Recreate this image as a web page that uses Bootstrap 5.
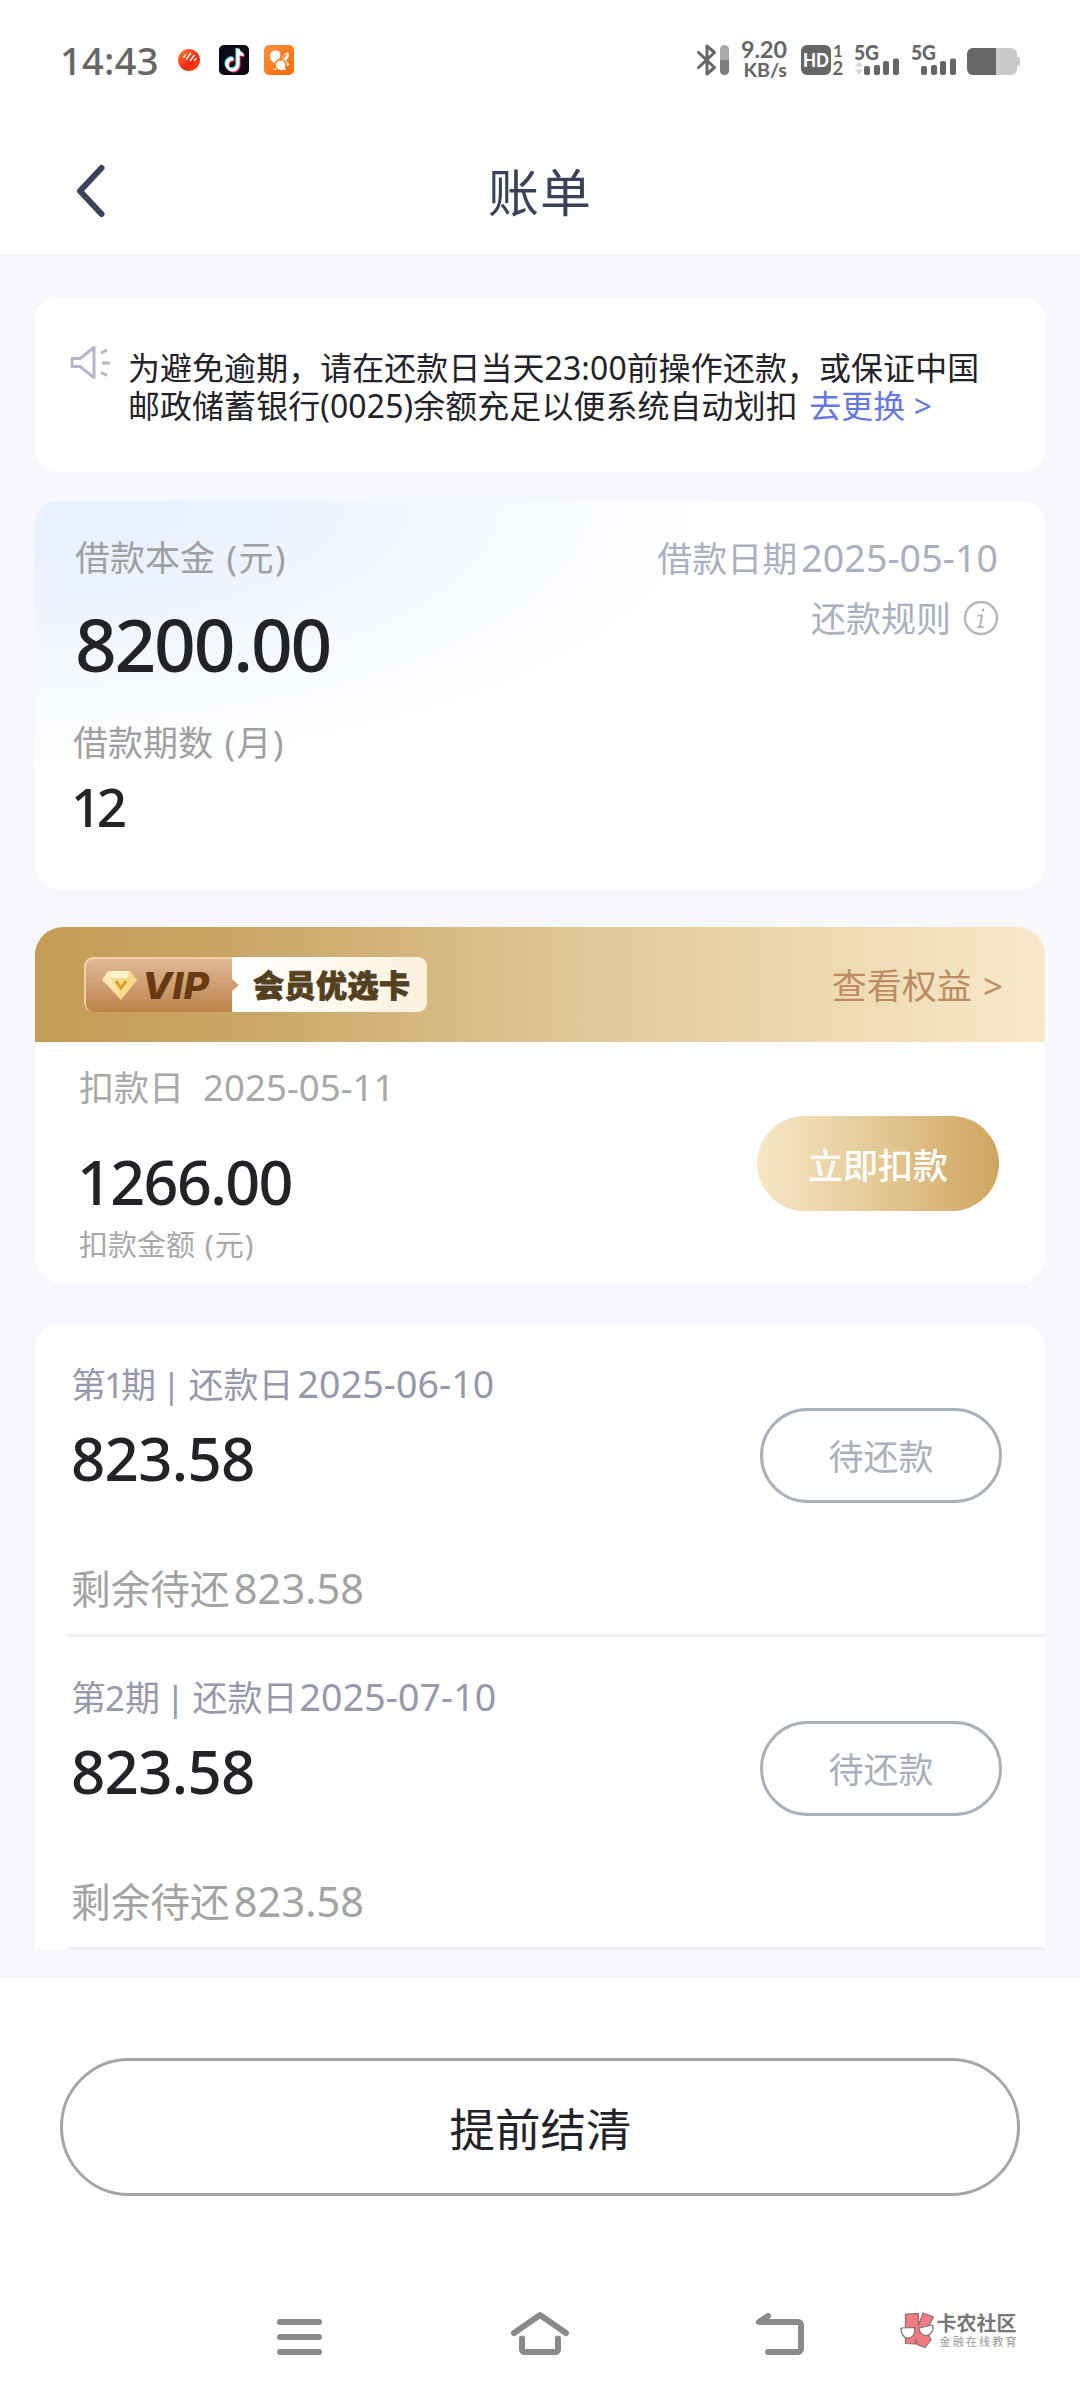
<!DOCTYPE html>
<html lang="zh-CN">
<head>
<meta charset="utf-8">
<meta name="viewport" content="width=device-width, initial-scale=1">
<title>账单</title>
<link href="https://cdn.jsdelivr.net/npm/bootstrap@5.3.0/dist/css/bootstrap.min.css" rel="stylesheet">
<style>
body{font-family:"Noto Sans","Noto Sans CJK SC",sans-serif;background:#fff;color:#222228;width:1080px;height:2400px;overflow:hidden}
svg{display:block;flex:none}
svg text{font-family:"Noto Sans","Noto Sans CJK SC",sans-serif}
.statusbar{height:120px;padding:0 60px;color:#666}
.clock{font-size:38px;font-weight:500;line-height:118px;width:98px;letter-spacing:.3px;white-space:nowrap}
.statusbar svg.status-icons text{font-family:Lato,"Noto Sans",sans-serif}
.titlebar{height:133px;padding:0 70px}
.titlebar h1{font-size:51px;font-weight:400;color:#39415b;line-height:145px;letter-spacing:1px;padding-top:11px}
.titlebar .side{width:60px;padding-top:9px}
.page-body{background:#f7f8fe;height:1726px;padding:45px 35px 0}
.panel{background:#fff;border-radius:22px}
.notice{height:174px;padding:51px 20px 0 33px;font-size:31.9px;letter-spacing:.15px;line-height:38px;margin-bottom:29px;white-space:nowrap}
.notice svg{margin-top:-3px}
.notice a{color:#6577e0;margin-left:3px}
.loan{height:388px;padding:36px 46px 0 40px;margin-bottom:38px;background:radial-gradient(ellipse 680px 270px at 0 0,#e8f1ff 0,#edf3ff 35%,#f8fbff 75%,#fff 100%) #fff}
.label-lg{font-size:35px;line-height:42px;color:#a0a0a3;white-space:nowrap}
.unit{letter-spacing:1.5px;margin-left:1px}
.label-sm .unit{letter-spacing:1.2px}
.cool{color:#aab0bf}
.loan-date{margin-right:1px}
.num{font-weight:500;white-space:nowrap}
.n-loan{font-size:73px;line-height:80px;letter-spacing:-2.2px;margin-top:25px}
.n-term{font-size:53px;line-height:60px;letter-spacing:-4.5px;margin:13px 0 0 -4px}
.term-count{margin:38px 0 0 -2px}
.rules{margin-top:18px}
.vip-panel{height:357px;margin-bottom:40px;overflow:hidden;border-radius:28px}
.vip-head{height:115px;padding:0 42px 0 49px;background:linear-gradient(90deg,#c39b55 0,#ccaa6b 25%,#e0c596 52%,#ecd7ae 75%,#f7e9ca 100%)}
.vip-link{font-size:35px;color:#bd8c63;text-decoration:none;white-space:nowrap;padding-top:4px}
.vip-body{padding:24px 46px 0 44px}
.n-fee{font-size:61px;line-height:70px;letter-spacing:-1.6px;margin:38px 0 0 -2px}
.label-sm{font-size:29px;line-height:36px;color:#a8a8a8;margin-top:10px;white-space:nowrap}
.pill{width:242px;height:95px;border-radius:48px;font-size:35px;padding:3px 0 0;line-height:1}
.pill-gold,.pill-gold:hover{background:linear-gradient(90deg,#f7e7c8,#e4c995 50%,#cfa45e);color:#fff;font-weight:500;border:0}
.pill-gold{margin-top:50px}
.pill-wait{border:3px solid #aab1bb;color:#aab0ba;background:#fff;margin-top:45px;padding-top:2px}
.plan{height:626px;border-radius:22px 22px 0 0;padding-left:32px}
.term{height:313px;padding:39px 43px 0 4px;border-bottom:3px solid #f0f1f7}
.term-cap{font-size:35px;line-height:42px;color:#9798aa;white-space:nowrap}
.n-one{letter-spacing:-3px;margin-left:-2px}
.n-two{letter-spacing:0;margin-left:-1px}
.divider-bar{margin:0 -1.5px 0 -3.5px}
.d{font-size:37.5px;letter-spacing:.1px}
.n-term-amt{font-size:60px;line-height:70px;letter-spacing:-.7px;margin-top:17px}
.remain{font-size:39.7px;line-height:50px;color:#a3a3a3;margin-top:70px;white-space:nowrap}
.remain .d{font-size:41.5px}
.settle-wrap{height:421px;padding:79px 60px 0}
.settle{height:138px;border:3px solid #a6a6a6;border-radius:69px;font-size:45.500px;color:#222228;background:#fff;line-height:1;padding:5px 0 0 1px}
.navkeys{margin-top:92px;height:70px;padding-left:217px}
</style>
<script src="https://cdn.jsdelivr.net/npm/bootstrap@5.3.0/dist/js/bootstrap.bundle.min.js"></script>
</head>
<body>
<header class="statusbar d-flex align-items-center justify-content-between">
  <div class="d-flex align-items-center">
    <span class="clock">14:43</span>
    <svg width="138" height="40" viewBox="158 40 138 40">
      <defs>
        <linearGradient id="red" x1="0" y1="0" x2="1" y2="1"><stop offset="0" stop-color="#ff873c"/><stop offset=".6" stop-color="#f22712"/><stop offset="1" stop-color="#f55a10"/></linearGradient>
        <linearGradient id="org" x1="0" y1="0" x2="1" y2="1"><stop offset="0" stop-color="#fb9140"/><stop offset="1" stop-color="#fa6a05"/></linearGradient>
      </defs>
      <circle cx="189" cy="60" r="11" fill="url(#red)"/>
      <path d="M184 57l1.500-2M186.500 59l4-5.500M190.500 60.500l3.500-5M194.500 60.500l1.500-2" stroke="#fff" stroke-width="1.500" stroke-linecap="round"/>
      <rect x="219" y="45" width="30" height="30" rx="5" fill="#0c0a17"/>
      <g fill="none" stroke-width="3.200">
        <path d="M233.500 59a5.500 5.500 0 1 0 4.500 5.500v-15.500c.5 3.500 2.500 5.500 5.500 5.500" stroke="#2ee8e2" transform="translate(-1 -1)"/>
        <path d="M233.500 59a5.500 5.500 0 1 0 4.500 5.500v-15.500c.5 3.500 2.500 5.500 5.500 5.500" stroke="#fb2c5a" transform="translate(1 1)"/>
        <path d="M233.500 59a5.500 5.500 0 1 0 4.500 5.500v-15.500c.5 3.500 2.500 5.500 5.500 5.500" stroke="#fff"/>
      </g>
      <rect x="264" y="45" width="30" height="30" rx="5" fill="url(#org)"/>
      <path d="M272 69.500c3 0 4.500-2 3-5-1-2-5-4-5-8 0-4 3-6.500 6.500-6 3.500.5 4.500 3.500 3.500 6.500l-1 3 5-4.500 3.500-3.500c1.500 1.500 2 4 .5 6l-2 2.500 3.500 4-3.500 2-2 3-9 .5z" fill="#fff"/>
      <circle cx="280.500" cy="65" r="5.500" fill="#fff" stroke="#fa7a1c" stroke-width="1.500"/>
      <path d="M279.500 60.500l7-5.500" stroke="#fa7a1c" stroke-width="1.400"/>
      <path d="M281 70h5l-2-5z" fill="#fff"/>
    </svg>
  </div>
  <svg class="status-icons" width="326" height="56" viewBox="694 32 326 56" fill="#666">
    <path d="M698.500 52.500l16 15-7.500 6.500V46l7.500 6.500-16 15" fill="none" stroke="#666" stroke-width="3" stroke-linejoin="round" stroke-linecap="round"/>
    <rect x="720" y="45" width="9" height="30" rx="4.500" fill="#aaa"/>
    <path d="M720 60h9v10.500a4.500 4.500 0 0 1-9 0z" fill="#7c7c7c"/>
    <text x="741" y="58" font-size="22" font-weight="700" textLength="46" lengthAdjust="spacingAndGlyphs">9.20</text>
    <text x="743.500" y="77" font-size="19.500" font-weight="700" textLength="43.500" lengthAdjust="spacingAndGlyphs">KB/s</text>
    <rect x="801" y="45" width="30" height="30" rx="6"/>
    <text x="803" y="66.500" font-size="18.500" font-weight="900" fill="#fff" textLength="26" lengthAdjust="spacingAndGlyphs">HD</text>
    <text x="833" y="57" font-size="17" font-weight="700">1</text>
    <text x="832.500" y="74.500" font-size="18.500" font-weight="700">2</text>
    <text x="854" y="59.500" font-size="20.500" font-weight="900" textLength="25" lengthAdjust="spacingAndGlyphs">5G</text>
    <path d="M855 66.500l4-5 4 5zM855 69.500l4 5 4-5z" fill="#d4d4d4"/>
    <rect x="864" y="66" width="6" height="9" rx="2"/><rect x="874" y="65" width="6" height="10" rx="2"/><rect x="883" y="61" width="6" height="14" rx="2"/><rect x="893" y="58.500" width="6" height="16.500" rx="2"/>
    <text x="911" y="59.500" font-size="20.500" font-weight="900" textLength="25" lengthAdjust="spacingAndGlyphs">5G</text>
    <rect x="921" y="66" width="6" height="9" rx="2"/><rect x="931" y="65" width="6" height="10" rx="2"/><rect x="940" y="61" width="6" height="14" rx="2"/><rect x="950" y="58.500" width="6" height="16.500" rx="2"/>
    <rect x="967" y="48" width="50" height="27" rx="6" fill="#c9c9c9"/><rect x="1014" y="57" width="6" height="9" rx="2" fill="#c9c9c9"/>
    <path d="M996 48h-23a6 6 0 0 0-6 6v15a6 6 0 0 0 6 6h23z"/>
  </svg>
</header>

<nav class="titlebar d-flex align-items-center justify-content-between">
  <div class="side">
    <svg width="40" height="60" viewBox="70 162 40 60"><path d="M101.500 169L80 192l21.500 23" fill="none" stroke="#39415b" stroke-width="6" stroke-linecap="round" stroke-linejoin="round"/></svg>
  </div>
  <h1 class="mb-0">账单</h1>
  <div class="side"></div>
</nav>

<main class="page-body">
  <section class="panel notice d-flex">
    <svg width="60" height="40" viewBox="68 345 60 40" fill="none" stroke="#b5b7c8" stroke-width="3"><path d="M72 357.500h8l14-11v30l-14-11h-8z" stroke-linejoin="round"/><path d="M101 352l6-3M102 362h8M101 371.500l6 3"/></svg>
    <div>为避免逾期，请在还款日当天23:00前操作还款，或保证中国<br>邮政储蓄银行(0025)余额充足以便系统自动划扣 <a href="#" class="text-decoration-none">去更换 &gt;</a></div>
  </section>

  <section class="panel loan d-flex justify-content-between">
    <div>
      <div class="label-lg">借款本金<span class="unit"> (元)</span></div>
      <div class="num n-loan">8200.00</div>
      <div class="label-lg term-count">借款期数<span class="unit"> (月)</span></div>
      <div class="num n-term">12</div>
    </div>
    <div class="d-flex flex-column align-items-end">
      <div class="label-lg cool loan-date">借款日期<span class="d ms-1">2025-05-10</span></div>
      <div class="label-lg cool rules d-flex align-items-center">还款规则
        <svg style="margin-left:12px" width="36" height="36" viewBox="0 0 36 36" fill="none" stroke="#b4b5bd" stroke-width="2.400"><circle cx="18" cy="17" r="16"/><path d="M14.500 14.500H19L17 25.500M14.500 26h6" stroke-width="1.900"/><circle cx="20" cy="9" r="1.400" fill="#b4b5bd" stroke="none"/></svg>
      </div>
    </div>
  </section>

  <section class="panel vip-panel">
    <div class="vip-head d-flex align-items-center justify-content-between">
      <svg width="343" height="55" viewBox="0 0 343 55">
        <defs>
          <linearGradient id="brz" x1="0" y1="0" x2="0" y2="1"><stop offset="0" stop-color="#dfb996"/><stop offset=".5" stop-color="#ce9d70"/><stop offset="1" stop-color="#bd8349"/></linearGradient>
          <linearGradient id="crm" x1="0" y1="0" x2="1" y2="0"><stop offset="0" stop-color="#fff"/><stop offset=".35" stop-color="#fffbf5"/><stop offset="1" stop-color="#fdf1dc"/></linearGradient>
        </defs>
        <rect x="0" y="0" width="342" height="55" rx="9" fill="#f3cda4"/>
        <path d="M148 0h186a9 9 0 0 1 9 9v37a9 9 0 0 1-9 9H148z" fill="url(#crm)"/>
        <path d="M10 2h138v20l7 6-7 6v21H10a8 8 0 0 1-8-8V10a8 8 0 0 1 8-8z" fill="url(#brz)"/>
        <path d="M24 14h22l7 9-16 20-19-20z" fill="#f7d98b"/><path d="M24 14h22l-3 7H27z" fill="#fff3cf"/><path d="M18 23l6-9 3 7 9 17z" fill="#fce9b5"/><path d="M32 24l5 7 5-7" fill="none" stroke="#d99a20" stroke-width="3"/>
        <text x="58" y="42" font-size="37" font-weight="800" font-style="italic" fill="#683b12" style="font-family:'Inter','Noto Sans',sans-serif" textLength="67" lengthAdjust="spacingAndGlyphs">VIP</text>
        <text x="169" y="40" font-size="31" font-weight="900" fill="#53401f" stroke="#53401f" stroke-width=".8" textLength="157">会员优选卡</text>
      </svg>
      <a href="#" class="vip-link">查看权益 <span style="margin-left:2px">&gt;</span></a>
    </div>
    <div class="vip-body d-flex justify-content-between">
      <div>
        <div class="label-lg" style="color:#a8a8a8">扣款日<span class="d" style="margin-left:19px;font-size:36.500px">2025-05-11</span></div>
        <div class="num n-fee">1266.00</div>
        <div class="label-sm">扣款金额<span class="unit"> (元)</span></div>
      </div>
      <button class="btn pill pill-gold">立即扣款</button>
    </div>
  </section>

  <section class="panel plan">
    <div class="term d-flex justify-content-between">
      <div>
        <div class="term-cap">第<span class="n-one">1</span>期 <span class="divider-bar">|</span> 还款日<span class="d ms-1">2025-06-10</span></div>
        <div class="num n-term-amt">823.58</div>
        <div class="remain">剩余待还<span class="d ms-1">823.58</span></div>
      </div>
      <button class="btn pill pill-wait">待还款</button>
    </div>
    <div class="term d-flex justify-content-between">
      <div>
        <div class="term-cap">第<span class="n-two">2</span>期 <span class="divider-bar">|</span> 还款日<span class="d" style="margin-left:2px">2025-07-10</span></div>
        <div class="num n-term-amt">823.58</div>
        <div class="remain">剩余待还<span class="d ms-1">823.58</span></div>
      </div>
      <button class="btn pill pill-wait">待还款</button>
    </div>
  </section>
</main>

<footer class="settle-wrap">
  <button class="btn settle w-100">提前结清</button>
  <div class="navkeys d-flex align-items-start">
    <svg width="743" height="70" viewBox="277 2288 743 70" fill="none" stroke="#8a8a8a" stroke-width="6" stroke-linecap="round" stroke-linejoin="round">
      <path d="M280 2322h39M280 2337h39M280 2352h39"/>
      <path d="M514 2333l26-18 26 18M522 2338.500v11a2.500 2.500 0 0 0 2.500 2.500h31a2.500 2.500 0 0 0 2.500-2.500v-11"/>
      <path d="M768 2316l-9 6h39a3 3 0 0 1 3 3v24a3 3 0 0 1-3 3h-30"/>
      <g stroke="#80706f" stroke-width="1.200">
        <path d="M905.500 2314l13-.500v12l4.500-12.500 10.500 4-7 13 4.500 10-6 7.500-8-3-1-6-.5 5.500-10-.500z" fill="#f37982"/>
        <path d="M901 2328l13.500-.500c1.500 7-3 11-7 10.500-4 0-6.500-5-6.500-10zM919 2328l13.500-3c2 5-1.500 10-6 10.500-4.500 0-7-3-7.500-7.500z" fill="#fff"/>
      </g>
      <g stroke="none">
        <text x="936.500" y="2331" font-size="20" font-weight="700" fill="#777" textLength="80">卡农社区</text>
        <text x="939.500" y="2346" font-size="11" fill="#999" textLength="77">金融在线教育</text>
      </g>
    </svg>
  </div>
</footer>
</body>
</html>
